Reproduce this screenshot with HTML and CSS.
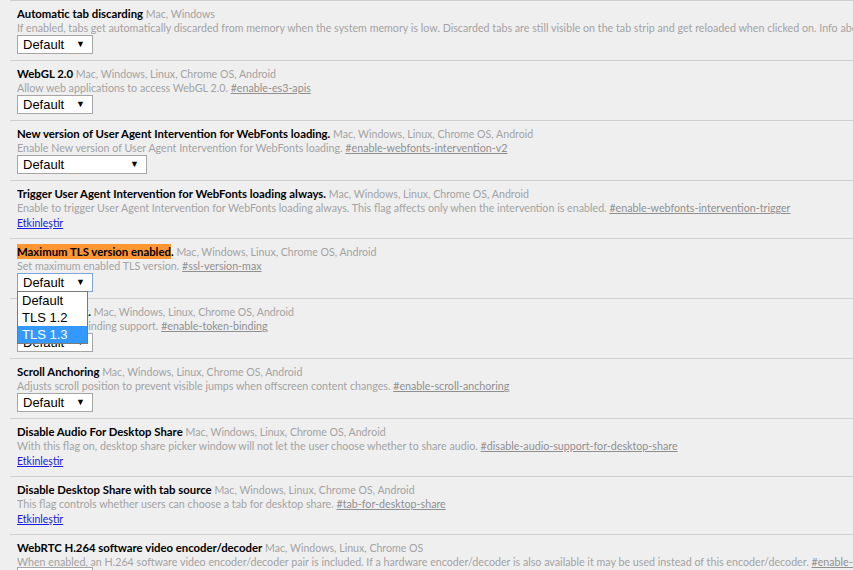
FILE: index.html
```html
<!DOCTYPE html>
<html lang="en">
<head>
<meta charset="utf-8">
<title>Flags</title>
<link rel="stylesheet" href="styles.css">
</head>
<body>
<div class="list">
  <div class="flag">
    <div class="title"><span class="name">Automatic tab discarding</span> <span class="plat">Mac, Windows</span></div>
    <div class="desc">If enabled, tabs get automatically discarded from memory when the system memory is low. Discarded tabs are still visible on the tab strip and get reloaded when clicked on. Info about discarded tabs can be found at chrome://discards. <a class="perma">#automatic-tab-discarding</a></div>
    <div class="select"><span>Default</span><span class="arrow">▼</span></div>
  </div>
  <div class="flag">
    <div class="title"><span class="name">WebGL 2.0</span> <span class="plat">Mac, Windows, Linux, Chrome OS, Android</span></div>
    <div class="desc">Allow web applications to access WebGL 2.0. <a class="perma">#enable-es3-apis</a></div>
    <div class="select"><span>Default</span><span class="arrow">▼</span></div>
  </div>
  <div class="flag">
    <div class="title"><span class="name">New version of User Agent Intervention for WebFonts loading.</span> <span class="plat">Mac, Windows, Linux, Chrome OS, Android</span></div>
    <div class="desc">Enable New version of User Agent Intervention for WebFonts loading. <a class="perma">#enable-webfonts-intervention-v2</a></div>
    <div class="select wide"><span>Default</span><span class="arrow">▼</span></div>
  </div>
  <div class="flag">
    <div class="title"><span class="name">Trigger User Agent Intervention for WebFonts loading always.</span> <span class="plat">Mac, Windows, Linux, Chrome OS, Android</span></div>
    <div class="desc">Enable to trigger User Agent Intervention for WebFonts loading always. This flag affects only when the intervention is enabled. <a class="perma">#enable-webfonts-intervention-trigger</a></div>
    <a class="enable">Etkinleştir</a>
  </div>
  <div class="flag">
    <div class="title"><span class="name"><mark class="hit">Maximum TLS version enabled</mark>.</span> <span class="plat">Mac, Windows, Linux, Chrome OS, Android</span></div>
    <div class="desc">Set maximum enabled TLS version. <a class="perma">#ssl-version-max</a></div>
    <div class="select-wrap">
      <div class="select focus"><span>Default</span><span class="arrow">▼</span></div>
      <ul class="dropdown">
        <li>Default</li>
        <li>TLS 1.2</li>
        <li class="active">TLS 1.3</li>
      </ul>
    </div>
  </div>
  <div class="flag">
    <div class="title"><span class="name">Token Binding.</span> <span class="plat">Mac, Windows, Linux, Chrome OS, Android</span></div>
    <div class="desc">Enable Token Binding support. <a class="perma">#enable-token-binding</a></div>
    <div class="select"><span>Default</span><span class="arrow">▼</span></div>
  </div>
  <div class="flag">
    <div class="title"><span class="name">Scroll Anchoring</span> <span class="plat">Mac, Windows, Linux, Chrome OS, Android</span></div>
    <div class="desc">Adjusts scroll position to prevent visible jumps when offscreen content changes. <a class="perma">#enable-scroll-anchoring</a></div>
    <div class="select"><span>Default</span><span class="arrow">▼</span></div>
  </div>
  <div class="flag">
    <div class="title"><span class="name">Disable Audio For Desktop Share</span> <span class="plat">Mac, Windows, Linux, Chrome OS, Android</span></div>
    <div class="desc">With this flag on, desktop share picker window will not let the user choose whether to share audio. <a class="perma">#disable-audio-support-for-desktop-share</a></div>
    <a class="enable">Etkinleştir</a>
  </div>
  <div class="flag">
    <div class="title"><span class="name">Disable Desktop Share with tab source</span> <span class="plat">Mac, Windows, Linux, Chrome OS, Android</span></div>
    <div class="desc">This flag controls whether users can choose a tab for desktop share. <a class="perma">#tab-for-desktop-share</a></div>
    <a class="enable">Etkinleştir</a>
  </div>
  <div class="flag last">
    <div class="title"><span class="name">WebRTC H.264 software video encoder/decoder</span> <span class="plat">Mac, Windows, Linux, Chrome OS</span></div>
    <div class="desc">When enabled, an H.264 software video encoder/decoder pair is included. If a hardware encoder/decoder is also available it may be used instead of this encoder/decoder. <a class="perma">#enable-webrtc-h264-with-openh264-ffmpeg</a></div>
    <div class="select"><span>Default</span><span class="arrow">▼</span></div>
  </div>
</div>
</body>
</html>
```
FILE: styles.css
```css
html, body {
  margin: 0;
  padding: 0;
  background: #efefef;
  overflow: hidden;
}
body {
  font-family: Lato, "Open Sans", sans-serif;
  font-size: 10.7px;
  color: #000;
}
.list {
  padding-left: 10px;
}
.flag {
  border-top: 1px solid #cfcfcf;
  padding: 5px 0 6px 7px;
}
.title {
  height: 15px;
  font-size: 10.7px;
  line-height: 15px;
  white-space: nowrap;
  overflow: hidden;
}
.name {
  font-weight: 700;
  font-size: 11.35px;
  line-height: 15px;
}
.plat {
  color: #a3a3a3;
  font-size: 10.6px;
  line-height: 15px;
}
.hit {
  background: #ff9632;
  color: #000;
  padding: 1px 0;
}
.desc {
  height: 14px;
  font-size: 10.7px;
  line-height: 14px;
  color: #a3a3a3;
  white-space: nowrap;
  overflow: hidden;
}
.perma {
  color: #8f8f8f;
  text-decoration: underline;
}
.select {
  box-sizing: border-box;
  width: 76px;
  height: 19px;
  background: #fff;
  border: 1px solid #a6a6a6;
  display: flex;
  align-items: center;
  justify-content: space-between;
  padding: 0 7px 0 5px;
  font-family: "Liberation Sans", Arial, sans-serif;
  font-size: 13px;
  line-height: 17px;
}
.flag.last .select {
  margin-top: -2px;
}
.select.wide {
  width: 130px;
}
.select.focus {
  border-color: #7ba4dd;
}
.arrow {
  font-size: 9px;
}
.select-wrap {
  position: relative;
  width: 76px;
  height: 19px;
}
.dropdown {
  position: absolute;
  left: 0;
  top: 18px;
  width: 71px;
  margin: 0;
  padding: 0;
  list-style: none;
  background: #fff;
  border: 1px solid #7a7a7a;
  box-sizing: border-box;
  font-family: "Liberation Sans", Arial, sans-serif;
  font-size: 13px;
  z-index: 5;
}
.dropdown li {
  height: 17px;
  line-height: 17px;
  padding-left: 4px;
}
.dropdown li.active {
  background: #3399ff;
  color: #fff;
}
.enable {
  display: block;
  width: max-content;
  height: 16px;
  margin-top: 1px;
  font-size: 10.5px;
  line-height: 15px;
  color: #1a1ae6;
  text-decoration: underline;
}
```
